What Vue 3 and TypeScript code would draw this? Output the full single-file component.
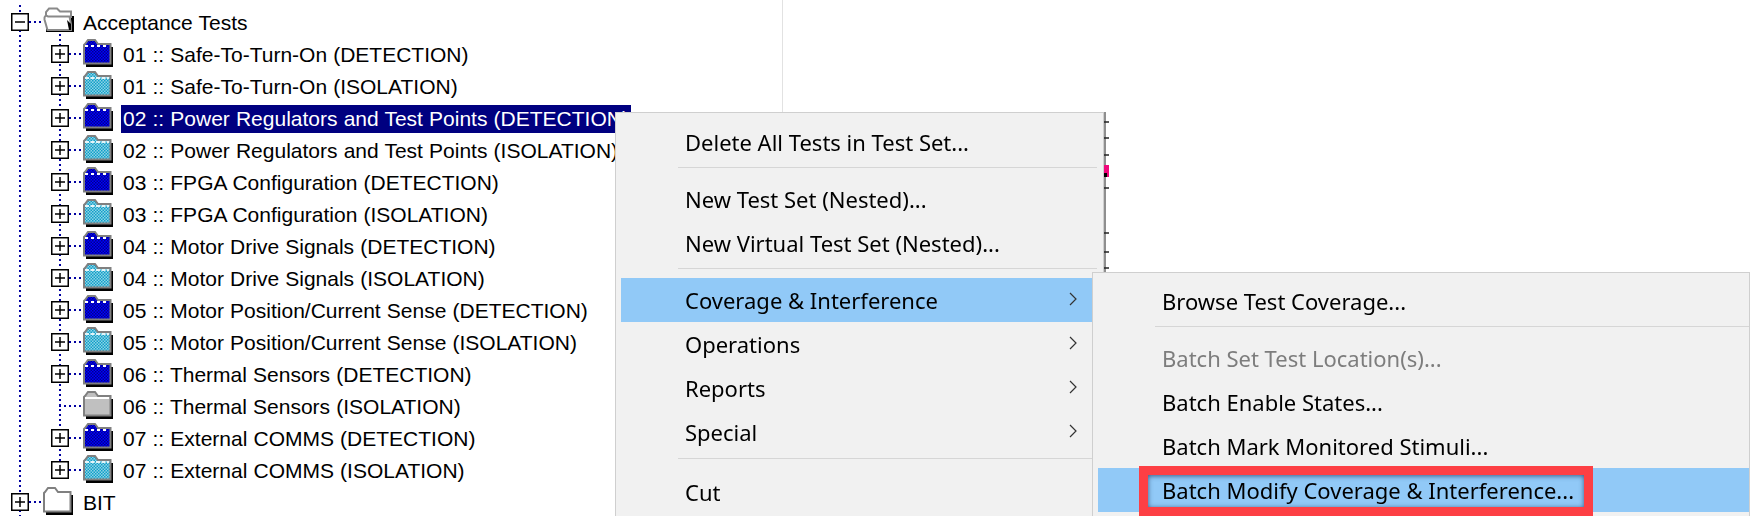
<script setup lang="ts">
type Variant = 'blue' | 'cyan' | 'grey' | 'white' | 'open'
interface Node { label: string; variant: Variant; level: number; expander: 'plus' | 'minus' | 'none'; selected?: boolean }

const names: string[] = [
  '01 :: Safe-To-Turn-On',
  '02 :: Power Regulators and Test Points',
  '03 :: FPGA Configuration',
  '04 :: Motor Drive Signals',
  '05 :: Motor Position/Current Sense',
  '06 :: Thermal Sensors',
  '07 :: External COMMS',
]

const nodes: Node[] = [{ label: 'Acceptance Tests', variant: 'open', level: 0, expander: 'minus' }]
for (const name of names) {
  const isThermal = name.startsWith('06')
  nodes.push({
    label: `${name} (DETECTION)`,
    variant: 'blue',
    level: 1,
    expander: 'plus',
    selected: name.startsWith('02'),
  })
  nodes.push({
    label: `${name} (ISOLATION)`,
    variant: isThermal ? 'grey' : 'cyan',
    level: 1,
    expander: isThermal ? 'none' : 'plus',
  })
}
nodes.push({ label: 'BIT', variant: 'white', level: 0, expander: 'plus' })

interface Entry { label?: string; arrow?: boolean; active?: boolean; disabled?: boolean; sep?: 'normal' | 'wide' }

const mainMenu: Entry[] = [
  { label: 'Delete All Tests in Test Set...' },
  { sep: 'normal' },
  { label: 'New Test Set (Nested)...' },
  { label: 'New Virtual Test Set (Nested)...' },
  { sep: 'normal' },
  { label: 'Coverage & Interference', arrow: true, active: true },
  { label: 'Operations', arrow: true },
  { label: 'Reports', arrow: true },
  { label: 'Special', arrow: true },
  { sep: 'wide' },
  { label: 'Cut' },
]

const subMenu: Entry[] = [
  { label: 'Browse Test Coverage...' },
  { sep: 'normal' },
  { label: 'Batch Set Test Location(s)...', disabled: true },
  { label: 'Batch Enable States...' },
  { label: 'Batch Mark Monitored Stimuli...' },
  { label: 'Batch Modify Coverage & Interference...', active: true },
]

const ticks = [10, 26, 43, 76, 121, 140, 156]
</script>

<template>
  <div class="screen">
    <svg class="defs" width="0" height="0" aria-hidden="true">
      <defs>
        <pattern id="dither-blue" width="3" height="3" patternUnits="userSpaceOnUse">
          <rect width="3" height="3" fill="#0000ff" />
          <rect width="1.5" height="1.5" fill="#00008c" />
          <rect x="1.5" y="1.5" width="1.5" height="1.5" fill="#00008c" />
        </pattern>
        <pattern id="dither-cyan" width="3" height="3" patternUnits="userSpaceOnUse">
          <rect width="3" height="3" fill="#8ed2e6" />
          <rect width="1.5" height="1.5" fill="#10a0c8" />
          <rect x="1.5" y="1.5" width="1.5" height="1.5" fill="#10a0c8" />
        </pattern>
      </defs>
    </svg>

    <div class="tree">
      <span class="trunk root-trunk"></span>
      <span class="trunk child-trunk"></span>
      <div v-for="node in nodes" :key="node.label" class="row" :class="`level-${node.level}`">
        <svg v-if="node.expander !== 'none'" class="toggle" width="18" height="18" viewBox="0 0 18 18">
          <rect x="0.75" y="0.75" width="16.5" height="16.5" fill="#fff" stroke="#000" stroke-width="1.5" />
          <path d="M4 9H14" stroke="#000" stroke-width="1.5" />
          <path v-if="node.expander === 'plus'" d="M9 4V14" stroke="#000" stroke-width="1.5" />
        </svg>
        <span v-else class="toggle blank"></span>
        <span class="elbow"></span>

        <svg class="folder" width="32" height="30" viewBox="0 0 32 30">
          <template v-if="node.variant === 'open'">
            <path d="M3 25H31V9H28V22H3Z" fill="#000" />
            <path d="M3 10V5L6 1.5H14L17 4.5H28V11" fill="#fff" stroke="#8a8a8a" stroke-width="2" />
            <path d="M1.5 12.5C1 9 3 8 5 9.5H26.5L28 17V23H4.5Z" fill="#fff" stroke="#8a8a8a" stroke-width="2" />
            <path d="M24 13L28 17V23H26Z" fill="#000" />
          </template>
          <template v-else>
            <path d="M28 8H30V28H3V25H28Z" fill="#000" />
            <path
              d="M1 6V24.5H27.5V5H15L12 1H5L2 5Z"
              :fill="node.variant === 'blue' ? 'url(#dither-blue)' : node.variant === 'cyan' ? 'url(#dither-cyan)' : node.variant === 'grey' ? '#c0c0c0' : '#fff'"
              stroke="#808080"
              stroke-width="2"
            />
            <path v-if="node.variant === 'blue'" d="M2 7H26" stroke="#fff" stroke-width="2" stroke-dasharray="3 3" />
            <path v-if="node.variant === 'cyan'" d="M2 7H26" stroke="#e4f4f8" stroke-width="2" stroke-dasharray="4 1.5" />
            <path v-if="node.variant === 'grey'" d="M2 7H26" stroke="#fff" stroke-width="2" />
          </template>
        </svg>
        <span class="label" :class="{ selected: node.selected }">{{ node.label }}</span>
      </div>
    </div>

    <svg class="ruler" width="6" height="160" viewBox="0 0 6 160">
      <rect x="0" width="2" height="160" fill="#8f8f8f" />
      <path v-for="t in ticks" :key="t" :d="`M0 ${t}H5`" stroke="#222" stroke-width="1.5" />
      <rect x="0" y="53" width="5" height="12" fill="#f0087c" />
      <rect x="0" y="61" width="3" height="4" fill="#000" />
    </svg>

    <div class="menu main-menu">
      <template v-for="(entry, i) in mainMenu" :key="i">
        <div v-if="entry.sep" class="sep" :class="{ wide: entry.sep === 'wide' }"></div>
        <div v-else class="item" :class="{ active: entry.active }">
          <span>{{ entry.label }}</span>
          <svg v-if="entry.arrow" class="chev" width="8" height="14" viewBox="0 0 8 14">
            <path d="M1 1L7 7L1 13" fill="none" stroke="#333" stroke-width="1.2" />
          </svg>
        </div>
      </template>
    </div>

    <div class="menu sub-menu">
      <template v-for="(entry, i) in subMenu" :key="i">
        <div v-if="entry.sep" class="sep"></div>
        <div v-else class="item" :class="{ active: entry.active, disabled: entry.disabled }">
          <span>{{ entry.label }}</span>
        </div>
      </template>
    </div>

    <div class="callout"></div>
  </div>
</template>

<style scoped>
.screen {
  position: relative;
  width: 1753px;
  height: 516px;
  overflow: hidden;
  background: #fff;
}
.defs {
  position: absolute;
}
.tree {
  position: relative;
  box-sizing: border-box;
  width: 783px;
  height: 516px;
  padding-top: 6px;
  border-right: 1px solid #e2e2e2;
  font-family: "Liberation Sans", Arial, sans-serif;
  font-size: 21px;
  word-spacing: 0.3px;
  color: #000;
}
.trunk {
  position: absolute;
  width: 1.5px;
  background-image: repeating-linear-gradient(to bottom, #0000a0 0 2px, transparent 2px 5px);
}
.root-trunk {
  left: 19px;
  top: 5px;
  bottom: 0;
}
.child-trunk {
  left: 59px;
  top: 34px;
  height: 430px;
}
.row {
  position: relative;
  display: flex;
  align-items: center;
  height: 32px;
  white-space: nowrap;
}
.level-0 {
  padding-left: 11px;
}
.level-1 {
  padding-left: 51px;
}
.toggle {
  flex: none;
  width: 18px;
  height: 18px;
}
.toggle.blank {
  height: 1.5px;
  width: 10px;
  margin-left: 8px;
  background-image: repeating-linear-gradient(to right, #0000a0 0 2px, transparent 2px 5px);
}
.elbow {
  flex: none;
  width: 14px;
  height: 1.5px;
  background-image: repeating-linear-gradient(to right, #0000a0 0 2px, transparent 2px 5px);
}
.folder {
  flex: none;
  width: 32px;
  height: 30px;
  margin-right: 6px;
}
.label {
  display: block;
  height: 28px;
  line-height: 27px;
  margin-top: 2px;
  padding: 0 2px;
}
.label.selected {
  background: #000080;
  color: #fff;
}
.ruler {
  position: absolute;
  left: 1104px;
  top: 112px;
  filter: blur(0.4px);
}
.menu {
  position: absolute;
  box-sizing: border-box;
  border: 1px solid #cfcfcf;
  background: #f1f1f1;
  font-family: "Noto Sans", "Open Sans", sans-serif;
  font-size: 22px;
  color: #000;
  filter: blur(0.3px);
}
.main-menu {
  left: 615px;
  top: 112px;
  width: 489px;
  height: 420px;
  padding: 7px 6px 0 5px;
}
.sub-menu {
  left: 1092px;
  top: 272px;
  width: 658px;
  height: 260px;
  padding: 6px 0 0 5px;
}
.item {
  display: flex;
  align-items: center;
  justify-content: space-between;
  height: 44px;
  padding: 0 20px 0 64px;
  box-sizing: border-box;
}
.item.active {
  background: #91c9f7;
}
.item.disabled {
  color: #7d7d7d;
}
.sep {
  height: 1px;
  margin: 3px 0 9px 57px;
  background: #d6d6d6;
}
.sep.wide {
  margin: 4px 0 11px 57px;
}
.chev {
  margin-top: -2px;
}
.callout {
  position: absolute;
  left: 1139px;
  top: 466px;
  width: 454px;
  height: 50px;
  box-sizing: border-box;
  border: 9px solid #fd3f44;
  box-shadow: inset 0 1px 5px 0 rgba(30, 50, 90, 0.75);
}
</style>
